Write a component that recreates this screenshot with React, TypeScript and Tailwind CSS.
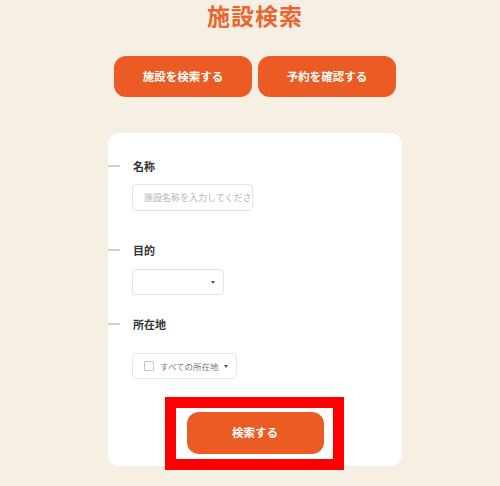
import React from 'react';

const font = { fontFamily: '"Noto Sans CJK JP", "Noto Sans", sans-serif' };

const Caret = () => (
  <span className="block w-0 h-0 border-l-[2.5px] border-r-[2.5px] border-t-[3px] border-l-transparent border-r-transparent border-t-[#555]" />
);

const Field = ({ label, children, gap }: { label: string; children: React.ReactNode; gap: string }) => (
  <div className="flex flex-col">
    <div className="flex items-center h-[14px]">
      <span className="w-[12px] h-[2px] bg-[#d6d1c2]" />
      <span className="ml-[13px] text-[11px] font-bold text-[#333] leading-none">{label}</span>
    </div>
    <div className={`pl-[24px] ${gap}`}>{children}</div>
  </div>
);

const App = () => {
  return (
    <div className="w-[500px] h-[486px] bg-[#f6efe3] overflow-hidden relative" style={font}>
      <div className="ml-[108px] w-[294px] flex flex-col items-center">
        <h1 className="mt-[2px] text-[23px] font-bold text-[#ea6630] leading-[26px] tracking-[1px]">施設検索</h1>

        <div className="mt-[28px] flex gap-[6px]">
          <button className="w-[138px] h-[41px] rounded-[12px] bg-[#eb5c24] text-white text-[11.5px] font-bold">
            施設を検索する
          </button>
          <button className="w-[138px] h-[41px] rounded-[12px] bg-[#eb5c24] text-white text-[11.5px] font-bold">
            予約を確認する
          </button>
        </div>

        <div className="mt-[36px] w-[294px] h-[333px] bg-white rounded-[12px] flex flex-col pt-[26px]">
          <Field label="名称" gap="mt-[11px]">
            <input
              placeholder="施設名称を入力してください"
              className="block w-[121px] h-[27px] border border-[#e3e3e3] rounded-[4px] pl-[11px] pr-0 text-[9px] outline-none placeholder:text-[#b5b5b5]"
              style={font}
            />
          </Field>

          <div className="mt-[32px]">
            <Field label="目的" gap="mt-[12px]">
              <div className="w-[92px] h-[26px] border border-[#e3e3e3] rounded-[4px] flex items-center justify-end pr-[8px]">
                <Caret />
              </div>
            </Field>
          </div>

          <div className="mt-[22px]">
            <Field label="所在地" gap="mt-[22px]">
              <div className="w-[105px] h-[26px] border border-[#e6e6e6] rounded-[4px] flex items-center pl-[11px] pr-[8px]">
                <span className="w-[10px] h-[10px] border border-[#c4c4c4] rounded-[1px]" />
                <span className="ml-[6px] text-[8.5px] text-[#777] leading-none whitespace-nowrap">すべての所在地</span>
                <span className="ml-auto">
                  <Caret />
                </span>
              </div>
            </Field>
          </div>

          <div className="mt-[33px] flex justify-center">
            <button className="w-[137px] h-[42px] rounded-[12px] bg-[#eb5c24] text-white text-[11.5px] font-bold">
              検索する
            </button>
          </div>
        </div>
      </div>

      <div className="absolute left-[165px] top-[397px] w-[179px] h-[73px] border-[11px] border-[#ff0000]" />
    </div>
  );
};

export default App;
